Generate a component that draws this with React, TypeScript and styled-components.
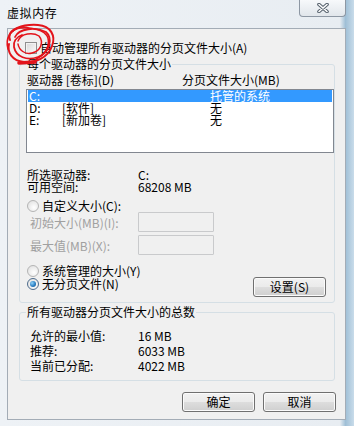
import React from "react";
import styled, { createGlobalStyle } from "styled-components";

const GlobalStyle = createGlobalStyle`
  html, body { margin: 0; padding: 0; background: #fff; }
  body {
    font-family: "Noto Sans CJK SC", "Noto Sans", sans-serif;
    font-size: 12px;
    color: #000;
  }
  * { box-sizing: border-box; }
`;

const Window = styled.div`
  position: relative;
  width: 354px;
  height: 426px;
  overflow: hidden;
  display: flex;
  flex-direction: column;
  background: linear-gradient(90deg, #eef2f6 0%, #e8edf2 96%, #9fbfd6 97.6%, #c9dcea 100%);
`;

const TitleBar = styled.div`
  height: 28px;
  flex: none;
  display: flex;
  justify-content: space-between;
  align-items: flex-start;
  padding: 0 8px 0 7px;
`;

const Title = styled.div`
  margin-top: 6px;
  font-size: 12px;
  line-height: 14px;
  letter-spacing: 0.6px;
`;

const CloseButton = styled.div`
  width: 47px;
  height: 17px;
  border: 1px solid #8d97a3;
  border-top: none;
  border-radius: 0 0 4px 4px;
  background: linear-gradient(#f7f9fb, #e1e6eb);
  display: flex;
  align-items: center;
  justify-content: center;
`;

const Client = styled.div`
  flex: 1;
  margin: 0 8px 6px 7px;
  border: 1px solid #a3acb6;
  background: #f0f0f0;
  padding: 0 9px 0 11px;
  display: flex;
  flex-direction: column;
`;

const CheckRow = styled.div`
  display: flex;
  align-items: center;
  gap: 3px;
  height: 12px;
  line-height: 12px;
  margin-top: 13px;
  padding-left: 6px;
`;

const CheckBox = styled.span`
  flex: none;
  width: 12px;
  height: 12px;
  border: 1px solid #8f8f8f;
  background: linear-gradient(135deg, #d8d8d8, #fbfbfb);
  box-shadow: inset 0 0 0 1px #f2f2f2;
`;

const GroupBox = styled.fieldset<{ $top: number; $bottom: number }>`
  margin: ${(p) => p.$top}px 1px 0 0;
  padding: 0 0 ${(p) => p.$bottom}px 6px;
  border: 1px solid #d5dfe5;
  border-radius: 3px;
  min-width: 0;
`;

const Legend = styled.legend`
  padding: 0 1px;
  font-size: 12px;
  line-height: 14px;
`;

const HeaderRow = styled.div`
  display: grid;
  grid-template-columns: 155px 1fr;
  height: 14px;
  line-height: 14px;
  margin-top: 2px;
  padding-left: 1px;
`;

const ListBox = styled.div`
  margin-top: 2px;
  height: 64px;
  border: 1px solid #828790;
  background: #fff;
  padding: 0 1px;
`;

const ListRow = styled.div<{ $selected?: boolean }>`
  display: grid;
  grid-template-columns: 33px 148px 1fr;
  height: 12px;
  line-height: 12px;
  padding-left: 1px;
  white-space: nowrap;
  background: ${(p) => (p.$selected ? "#3399ff" : "transparent")};
  color: ${(p) => (p.$selected ? "#fff" : "#000")};
`;

const InfoGrid = styled.div<{ $top: number; $label: number; $row: number; $indent: number }>`
  display: grid;
  grid-template-columns: ${(p) => p.$label}px 1fr;
  grid-auto-rows: ${(p) => p.$row}px;
  line-height: ${(p) => p.$row}px;
  margin-top: ${(p) => p.$top}px;
  padding-left: ${(p) => p.$indent}px;
  white-space: nowrap;
`;

const RadioRow = styled.div<{ $top?: number; $h?: number }>`
  display: flex;
  align-items: center;
  gap: 3px;
  height: ${(p) => p.$h ?? 12}px;
  line-height: 12px;
  margin-top: ${(p) => p.$top ?? 0}px;
  padding-left: 1px;
  white-space: nowrap;
`;

const Radio = styled.span<{ $checked?: boolean }>`
  flex: none;
  position: relative;
  width: 12px;
  height: 12px;
  border-radius: 50%;
  border: 1px solid ${(p) => (p.$checked ? "#4e6c8c" : "#b4b4b4")};
  background: radial-gradient(circle at 60% 65%, #ffffff 0%, #dcdcdc 100%);
  &::after {
    content: "";
    display: ${(p) => (p.$checked ? "block" : "none")};
    position: absolute;
    left: 2px;
    top: 2px;
    width: 6px;
    height: 6px;
    border-radius: 50%;
    background: radial-gradient(circle at 35% 35%, #8fd1f7 0%, #2a7fc4 55%, #124f85 100%);
  }
`;

const SizeRows = styled.div`
  display: flex;
  flex-direction: column;
  gap: 3px;
`;

const SizeRow = styled.div`
  display: grid;
  grid-template-columns: 108px 76px;
  align-items: center;
  height: 20px;
  padding-left: 4px;
  color: #a0a0a0;
  white-space: nowrap;
`;

const TextInput = styled.div`
  height: 20px;
  border: 1px solid #c9cacc;
  border-radius: 1px;
  background: #f0f0f0;
`;

const ModeArea = styled.div`
  display: flex;
  align-items: flex-start;
  margin-top: 9px;
`;

const RadioColumn = styled.div`
  display: flex;
  flex-direction: column;
`;

const Button = styled.div<{ $top?: number; $right?: number }>`
  width: 73px;
  height: 20px;
  margin-top: ${(p) => p.$top ?? 0}px;
  margin-left: auto;
  margin-right: ${(p) => p.$right ?? 0}px;
  border: 1px solid #707070;
  border-radius: 3px;
  background: linear-gradient(#f2f2f2 0%, #ebebeb 48%, #dddddd 52%, #cfcfcf 100%);
  box-shadow: inset 0 0 0 1px #fbfbfb;
  display: flex;
  align-items: center;
  justify-content: center;
  line-height: 12px;
  white-space: nowrap;
`;

const ButtonBar = styled.div`
  display: flex;
  justify-content: flex-end;
  gap: 8px;
  margin-top: 11px;
`;

const BarButton = styled(Button)`
  margin-left: 0;
`;

const Annotation = styled.svg`
  position: absolute;
  left: 0;
  top: 0;
  width: 70px;
  height: 80px;
  pointer-events: none;
`;

const drives = [
  { drive: "C:", label: "", size: "托管的系统", selected: true },
  { drive: "D:", label: "[软件]", size: "无" },
  { drive: "E:", label: "[新加卷]", size: "无" },
];

export default function App() {
  return (
    <>
      <GlobalStyle />
      <Window>
        <TitleBar>
          <Title>虚拟内存</Title>
          <CloseButton>
            <svg width="12" height="10" viewBox="0 0 12 10">
              <path d="M2 1.5 L10 8.5 M10 1.5 L2 8.5" stroke="#55606c" strokeWidth="3.6" strokeLinecap="round" />
              <path d="M2 1.5 L10 8.5 M10 1.5 L2 8.5" stroke="#ffffff" strokeWidth="1.6" strokeLinecap="round" />
            </svg>
          </CloseButton>
        </TitleBar>
        <Client>
          <CheckRow>
            <CheckBox />
            <span>自动管理所有驱动器的分页文件大小(A)</span>
          </CheckRow>
          <GroupBox $top={3} $bottom={5}>
            <Legend>每个驱动器的分页文件大小</Legend>
            <HeaderRow>
              <span>驱动器 [卷标](D)</span>
              <span>分页文件大小(MB)</span>
            </HeaderRow>
            <ListBox>
              {drives.map((d) => (
                <ListRow key={d.drive} $selected={d.selected}>
                  <span>{d.drive}</span>
                  <span>{d.label}</span>
                  <span>{d.size}</span>
                </ListRow>
              ))}
            </ListBox>
            <InfoGrid $top={16} $label={111} $row={12} $indent={1}>
              <span>所选驱动器:</span>
              <span>C:</span>
              <span>可用空间:</span>
              <span>68208 MB</span>
            </InfoGrid>
            <RadioRow $top={7}>
              <Radio />
              <span>自定义大小(C):</span>
            </RadioRow>
            <SizeRows>
              <SizeRow>
                <span>初始大小(MB)(I):</span>
                <TextInput />
              </SizeRow>
              <SizeRow>
                <span>最大值(MB)(X):</span>
                <TextInput />
              </SizeRow>
            </SizeRows>
            <ModeArea>
              <RadioColumn>
                <RadioRow $h={13}>
                  <Radio />
                  <span>系统管理的大小(Y)</span>
                </RadioRow>
                <RadioRow $h={13}>
                  <Radio $checked />
                  <span>无分页文件(N)</span>
                </RadioRow>
              </RadioColumn>
              <Button $top={13} $right={8}>设置(S)</Button>
            </ModeArea>
          </GroupBox>
          <GroupBox $top={2} $bottom={7}>
            <Legend>所有驱动器分页文件大小的总数</Legend>
            <InfoGrid $top={9} $label={108} $row={15} $indent={4}>
              <span>允许的最小值:</span>
              <span>16 MB</span>
              <span>推荐:</span>
              <span>6033 MB</span>
              <span>当前已分配:</span>
              <span>4022 MB</span>
            </InfoGrid>
          </GroupBox>
          <ButtonBar>
            <BarButton>确定</BarButton>
            <BarButton>取消</BarButton>
          </ButtonBar>
        </Client>
        <Annotation viewBox="0 0 70 80">
          <g fill="none" stroke="#e3141b" strokeLinecap="round" strokeLinejoin="round">
            <path d="M10 40 C6 29, 24 24, 38 25 C51 26, 56 36, 52 46 C48 58, 35 63, 24 62 C12 61, 7 52, 9 44" strokeWidth="2" />
            <path d="M15 37 C19 28, 36 27, 46 32 C53 38, 50 53, 38 57 C27 61, 16 57, 14 47 C13 42, 16 37, 22 35" strokeWidth="1.8" />
            <path d="M8 49 C5 38, 11 29, 20 28 C30 27, 45 29, 48 38 C50 46, 45 55, 36 59" strokeWidth="1.6" />
            <path d="M18 41 C21 33, 33 32, 39 36 C44 42, 41 51, 32 53 C25 55, 19 50, 18 44" strokeWidth="1.5" />
            <path d="M13 31 C18 26, 26 26, 30 29" strokeWidth="1.6" />
            <path d="M19 63 L35 62" strokeWidth="3.6" />
          </g>
        </Annotation>
      </Window>
    </>
  );
}
